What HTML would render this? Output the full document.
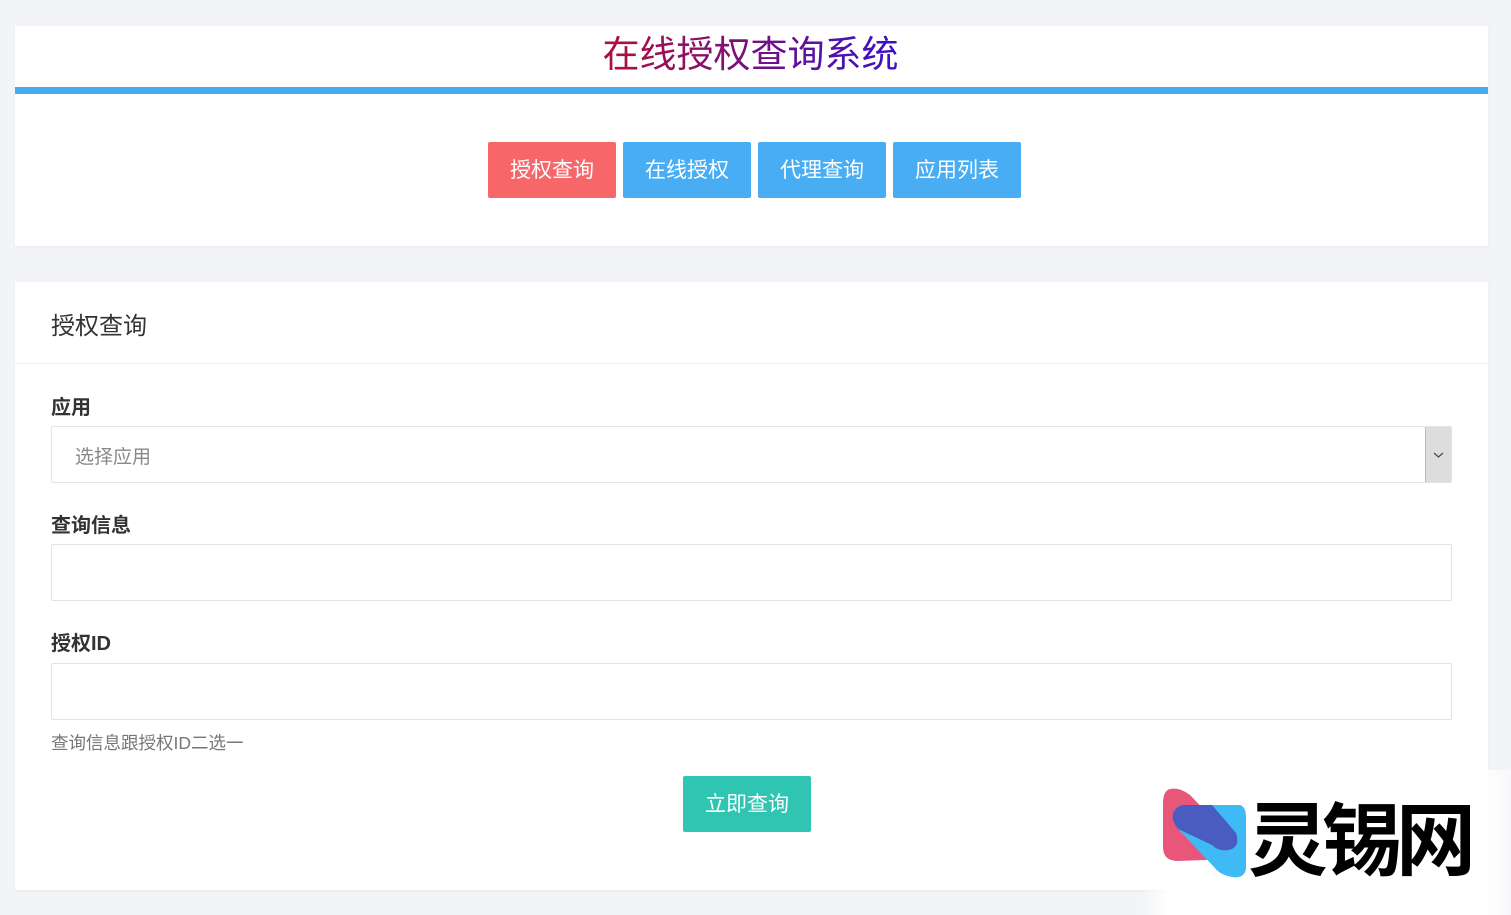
<!DOCTYPE html>
<html><head><meta charset="utf-8"><style>
body{margin:0;background:#f3f4f8;font-family:"Liberation Sans","Noto Sans CJK SC",sans-serif;width:1511px;height:915px;overflow:hidden;position:relative}
.card{position:absolute;left:15px;width:1473px;background:#fff;box-shadow:0 1px 3px rgba(0,0,0,.05)}
.title{position:absolute;left:0;right:0;top:30px;text-align:center;font-size:37px;line-height:50px;height:56px;padding-right:10px}
.title span{background:linear-gradient(90deg,#b0103a,#3a10c8);-webkit-background-clip:text;background-clip:text;color:transparent}
.bar{position:absolute;left:0;right:0;top:87px;height:7px;background:#44acf0}
.btns{position:absolute;top:142px;left:488px;display:flex;gap:7px}
.btns div{width:128px;height:56px;line-height:58px;text-align:center;color:#fff;font-size:21px;border-radius:2px;background:#48adf3}
label{position:absolute;left:51px;font-weight:bold;font-size:20px;color:#333}
.in{position:absolute;left:51px;width:1399px;height:55px;border:1px solid #e2e4e8;border-radius:2px;background:#fff}
</style></head><body>
<div class="card" style="top:26px;height:220px"></div>
<div class="title"><span>在线授权查询系统</span></div>
<div class="bar" style="left:15px;right:23px"></div>
<div class="btns"><div style="background:#f7676a">授权查询</div><div>在线授权</div><div>代理查询</div><div>应用列表</div></div>
<div class="card" style="top:282px;height:608px"></div>
<div style="position:absolute;left:51px;top:306px;font-size:24px;color:#333">授权查询</div>
<div style="position:absolute;left:15px;width:1473px;top:363px;height:1px;background:#eef0f3"></div>
<label style="top:391px">应用</label>
<div class="in" style="top:426px"><span style="position:absolute;left:23px;top:15px;font-size:19px;color:#888">选择应用</span>
<div style="position:absolute;right:0;top:0;width:25px;height:55px;background:#ddd;border-left:1px solid #bbb"><svg width="25" height="55"><path d="M8 26l4.5 4 4.5-4" fill="none" stroke="#444" stroke-width="1.2"/></svg></div></div>
<label style="top:509px">查询信息</label>
<div class="in" style="top:544px"></div>
<label style="top:627px">授权ID</label>
<div class="in" style="top:663px"></div>
<div style="position:absolute;left:51px;top:730px;font-size:17.5px;color:#777">查询信息跟授权ID二选一</div>
<div style="position:absolute;left:683px;top:776px;width:128px;height:56px;line-height:58px;text-align:center;color:#fff;font-size:21px;background:#2fc5b2;border-radius:2px">立即查询</div>
<div style="position:absolute;left:1140px;top:770px;width:371px;height:145px;background:linear-gradient(90deg,rgba(255,255,255,0),#fff 8%,#fff 92%,rgba(255,255,255,0.4))"></div>
<svg style="position:absolute;left:1160px;top:785px" width="90" height="96">
<path d="M10 4 Q20 2 30 10 L70 52 Q78 62 70 74 L18 76 Q3 76 3 62 L3 18 Q3 6 10 4Z" fill="#e8567a"/>
<path d="M24 20 L80 20 Q86 22 86 32 L86 84 Q84 94 72 92 Q60 90 54 82 L18 44 Q10 34 14 26 Q18 20 24 20Z" fill="#3fbaf5"/>
<path d="M24 20 L52 20 L76 48 Q80 60 72 64 Q60 68 52 60 L18 44 Q10 34 14 26 Q18 20 24 20Z" fill="#4a5cbf"/>
</svg>
<div style="position:absolute;left:1248px;top:790px;font-size:80px;line-height:90px;font-weight:bold;color:#000;letter-spacing:-6px;font-family:'Noto Sans CJK SC',sans-serif">灵锡网</div>
</body></html>
